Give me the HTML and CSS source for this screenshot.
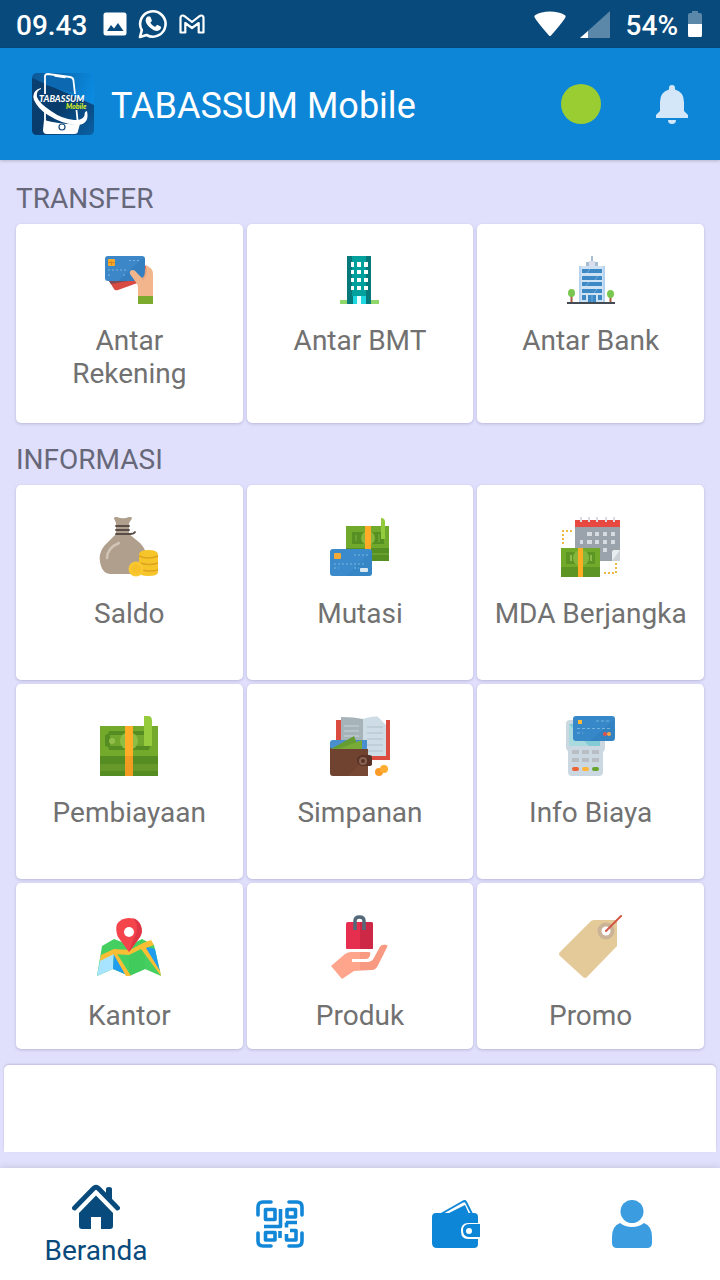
FILE: index.html
```
<!DOCTYPE html>
<html lang="id">
<head>
<meta charset="utf-8">
<meta name="viewport" content="width=device-width, initial-scale=1">
<title>TABASSUM Mobile</title>
<link rel="stylesheet" href="styles.css">
</head>
<body>
<div class="status">
  <span class="status-text">09.43</span>
  <div class="status-notes">
    <svg width="24" height="24" viewBox="0 0 24 24"><path fill="#fff" fill-rule="evenodd" d="M3 0.500h18q2.500 0 2.500 2.500v18q0 2.500-2.500 2.500H3Q.5 23.500.5 21V3Q.5.5 3 .5zM4 19h16.500l-5.500-8-4 5.500-3-3.500z"/></svg>
    <svg width="30" height="30" viewBox="0 0 30 30"><path fill="none" stroke="#fff" stroke-width="2.600" stroke-linejoin="round" d="M2 28l1.800-6.800A12.700 12.700 0 1 1 8.600 26z"/><path fill="#fff" d="M9.500 7.500h2.200q.6 0 .9.800l1.200 2.900q.2.600-.3 1.200l-1.200 1.400q1.700 2.900 4.800 4.200l1.500-1.800q.5-.5 1.100-.2l2.900 1.400q.6.300.5.900-.4 3.400-4.100 3.600-3.500 0-7.400-3.700-3.900-3.800-4-6.800 0-2.600 1.900-3.900z"/></svg>
    <svg width="26" height="20" viewBox="0 0 26 20"><path fill="none" stroke="#fff" stroke-width="2.200" stroke-linejoin="round" d="M1.500 4q0-2.500 2.300-2.500.9 0 1.700.700L13 8l7.500-5.800q.8-.7 1.700-.7 2.300 0 2.300 2.500v14.500h-4.800V9L13 14 6.300 9v9.500H1.500z"/></svg>
  </div>
  <div class="status-system">
    <svg width="32" height="26" viewBox="0 0 32 26"><path fill="#fff" d="M.5 6Q0 5 1 4.200 7 .5 16 .5t15 3.700q1 .8.5 1.800-1 3-14.500 18.600-1 1-2 0Q1.500 9 .5 6z"/></svg>
    <svg class="signal" width="30" height="27" viewBox="0 0 30 27"><path fill="#5b87a9" d="M30 0v27H0z"/><path fill="#fff" d="M8 20v7H0z"/></svg>
    <span class="status-text">54%</span>
    <svg width="14" height="26" viewBox="0 0 14 26"><path fill="#5b87a9" d="M4 0h6v2h2q2 0 2 2v10H0V4q0-2 2-2h2z"/><path fill="#fff" d="M0 13h14v11q0 2-1 2H1q-1 0-1-2z"/></svg>
  </div>
</div>

<header class="appbar">
  <svg class="logo" width="62" height="62" viewBox="0 0 62 62" role="img" aria-label="Logo">
    <defs>
      <linearGradient id="sky" x1="0" y1="0" x2="1" y2=".3"><stop offset="0" stop-color="#0d5795"/><stop offset="1" stop-color="#0a8ae0"/></linearGradient>
      <linearGradient id="deep" x1="0" y1="0" x2="1" y2="1"><stop offset="0" stop-color="#0a4072"/><stop offset=".5" stop-color="#073b6c"/><stop offset="1" stop-color="#0a62a6"/></linearGradient>
    </defs>
    <rect width="62" height="62" rx="5" fill="url(#sky)"/>
    <path fill="url(#deep)" d="M0 5L62 32v25q0 5-5 5H5q-5 0-5-5z"/>
    <path fill="#0c68b0" d="M14 3l26 3 2 14-28-8z"/>
    <path fill="none" stroke="#fff" stroke-width="1.800" d="M13 21V3q0-2 3-2l22 3q3 .5 3.400 3L43 21M13 36v12M44.500 37l1 10"/>
    <path stroke="#fff" stroke-width="1.400" stroke-linecap="round" d="M23 3l10 1.500"/>
    <path fill="#fff" d="M12 47q17 5 36 4l-2 7q0 3-4 3H15q-4 0-4-4z"/>
    <path fill="#fff" d="M9 15Q-1 18 2 27q4 9 14 15 14 9 28 10 14 0 11-14l-2 1q0 9-11 8-12-1-23-9Q7 30 5 24q-1-6 4-8z"/>
    <circle cx="30" cy="54" r="3" fill="#fff" stroke="#184b79" stroke-width="1.200"/>
    <text class="logo-name" x="7" y="29">TABASSUM</text>
    <text class="logo-sub" x="34" y="36">Mobile</text>
  </svg>
  <h1 class="title">TABASSUM Mobile</h1>
  <span class="online" role="img" aria-label="Online"></span>
  <button class="bell" type="button" aria-label="Notifikasi"><svg width="32" height="40" viewBox="0 0 32 40"><path fill="#d3e7f8" d="M16 1q3 0 3 3v1.500Q28 8 28 18v9l4 4v3H0v-3l4-4V18Q4 8 13 5.500V4q0-3 3-3zM12 36h8q0 4-4 4t-4-4z"/></svg></button>
</header>

<main class="content">
  <section class="group">
    <h2 class="heading">TRANSFER</h2>
    <div class="cards">
      <a class="card" href="#rekening">
        <svg width="48" height="48" viewBox="0 0 48 48"><path fill="#d94a42" d="M4 25l5 8q1 2 4 1l25-9 5-14-6-3z"/><path fill="#7f4a55" d="M4 25l2 3 17-3z"/><rect width="40" height="25" rx="3" fill="#3b87c8"/><path fill="#2f78b8" d="M13 25L38 2q2 0 2 3v17q0 3-3 3z" opacity=".5"/><rect x="3" y="3" width="7" height="7" rx="1" fill="#f7a928"/><path stroke="#d78422" d="M3 6.500h7M6.500 5v4"/><path fill="none" stroke="#7fb2dc" stroke-dasharray="2 2" d="M24 4.500h12M3 14h20M3 19h4M18 19h4"/><path fill="#f2b58c" d="M25 18q-1-4 3-4 2 0 4 3l5 5q3 0 3-5l1-8 3 2q4 2 4 7v22H33v-9q0-3-3-6z"/><path fill="#e7a37b" d="M40 14l2-2q0 9-4 12l-2-2q4 0 4-8z"/><rect x="33" y="40" width="15" height="8" fill="#7baa2c"/></svg>
        <span class="label">Antar<br>Rekening</span>
      </a>
      <a class="card" href="#bmt">
        <svg width="48" height="48" viewBox="0 0 48 48"><path fill="#91d668" d="M4 44h39v4H4z"/><path fill="#07797a" d="M11 0h24v48H11z"/><path fill="#00a09d" d="M16 0h14v40H16z"/><path fill="#fff" d="M15 6h3v5h-3zM21 6h4v5h-4zM28 6h4v5h-4zM15 14h3v4h-3zM21 14h4v4h-4zM28 14h4v4h-4zM15 22h3v4h-3zM21 22h4v4h-4zM28 22h4v4h-4zM15 30h3v4h-3zM21 30h4v4h-4zM28 30h4v4h-4z"/><path fill="#1ed8e1" d="M17 40h13v8H17z"/><path fill="#e9feff" d="M21 40h4v8h-4z"/></svg>
        <span class="label">Antar BMT</span>
      </a>
      <a class="card" href="#bank">
        <svg width="48" height="48" viewBox="0 0 48 48"><path fill="#a9bdd2" d="M24 0h2v7h-2zM19 6h12v5H19z"/><path fill="#d9dfef" d="M22 5h6v5h-6z"/><path fill="#cfe2f4" d="M12 10h26v37H12z"/><path fill="#b4d1ed" d="M12 10h2v37h-2zM36 10h2v37h-2z"/><path fill="#3d89c6" d="M15 13h20v4H15zM15 20h20v4H15zM15 26h20v4H15zM15 33h20v4H15zM15 39h4v5h-4zM21 39h8v7h-8zM31 39h4v5h-4z"/><path stroke="#6fabdc" d="M20 17l3-4M28 24l3-4M19 30l3-4M27 37l3-4M25 39v7"/><path stroke="#a65c3e" stroke-width="2" d="M4.500 39v8M43.500 39v8"/><ellipse cx="4.500" cy="37" rx="3.500" ry="4" fill="#79c74e"/><ellipse cx="43.500" cy="38" rx="3.500" ry="4" fill="#79c74e"/><path fill="#434b54" d="M0 46h48v2H0z"/></svg>
        <span class="label">Antar Bank</span>
      </a>
    </div>
  </section>

  <section class="group">
    <h2 class="heading">INFORMASI</h2>
    <div class="cards cards-tall">
      <a class="card" href="#saldo">
        <svg width="60" height="60" viewBox="0 0 60 60"><path fill="#b09f8c" d="M15 1.500Q15-.5 18 0q6 2.500 12 0 3-.5 3 1.500L30 6v11l11 9q9 9 5 20-3 11-11 11H11Q4 56 2 49-2 37 6 28l11-11V6z"/><path fill="none" stroke="#594d47" stroke-width="1.800" stroke-linecap="round" d="M17 9h13M17 13h13M17 17h14q4 0 5-2"/><path fill="none" stroke="#d1c4b5" stroke-width="2.500" stroke-linecap="round" d="M8 41q0-10 12-15"/><path fill="#f6c52a" d="M40 38q0-5 9.500-5t9.500 5v17q0 4-9.500 4T40 55z"/><path fill="none" stroke="#dfa321" stroke-width="1.500" d="M40 39q9 4 19 0M41 46q9 3 18 0M43 53q8 2 16 0"/><circle cx="37" cy="52" r="7.500" fill="#fac931"/><circle cx="37" cy="52" r="5" fill="#f7c229"/></svg>
        <span class="label">Saldo</span>
      </a>
      <a class="card" href="#mutasi">
        <svg width="60" height="60" viewBox="0 0 60 60"><path fill="#71a92c" d="M16 9h43v35H16z"/><path fill="#579022" d="M16 31h43v13H16zM22 15h32v12H22z"/><circle cx="38" cy="21" r="7" fill="#86b63b"/><path fill="none" stroke="#69a030" stroke-width="2" d="M26 18v6M49 17v8M16 37h43"/><path fill="#ffab28" d="M35 9h6v35h-6z"/><path fill="#93cb3e" d="M51 1q4 0 4 4v17h-4z"/><rect y="32" width="42" height="27" rx="3" fill="#3b8acb"/><path fill="#2e7ebd" d="M16 59L42 34v22q0 3-3 3z" opacity=".35"/><rect x="4" y="36" width="7" height="6" rx="1" fill="#f7a936"/><path fill="none" stroke="#79b6df" stroke-dasharray="2 2" d="M24 38h14M4 47h30M4 51h5M24 51h5"/><rect x="30" y="51" width="8" height="4" rx="1" fill="#dce8ef"/></svg>
        <span class="label">Mutasi</span>
      </a>
      <a class="card" href="#mda">
        <svg width="60" height="60" viewBox="0 0 60 60"><path fill="#9aa3ab" d="M14 3h45v41H14z"/><path fill="#e7483f" d="M14 3h45v7H14z"/><path fill="#d7dce2" d="M19 0h2v5h-2zM27 0h2v5h-2zM35 0h2v5h-2zM44 0h2v5h-2zM52 0h2v5h-2zM26 15h5v4h-5zM34 15h4v4h-4zM42 15h4v4h-4zM50 15h4v4h-4zM19 23h3v4h-3zM26 23h5v4h-5zM34 23h4v4h-4zM42 23h4v4h-4zM50 23h4v4h-4zM42 31h4v4h-4z"/><path fill="#e9edf0" d="M51 44V35q0-2 2-2h6v3z"/><path fill="#ccd3d8" d="M59 33v11h-8z"/><path fill="none" stroke="#efb940" stroke-width="2" stroke-dasharray="2 2" d="M11 14H2v15M43 56h12V45"/><path fill="#71aa2b" d="M0 31h39v29H0z"/><path fill="#5c9524" d="M0 50h39v10H0zM5 35h29v12H5z"/><circle cx="20" cy="41" r="8" fill="#83b63b"/><path fill="none" stroke="#8dbb4b" stroke-width="2" d="M10 38v6M30 38v6"/><path fill="#ffac25" d="M17 31h5v29h-5z"/></svg>
        <span class="label">MDA Berjangka</span>
      </a>
      <a class="card" href="#pembiayaan">
        <svg width="60" height="60" viewBox="0 0 60 60"><path fill="#73aa2c" d="M1 10h58v50H1z"/><path fill="#568d22" d="M1 40h58v20H1zM10 15h40q0 3 3 4v11q-3 0-3 4H10q0-4-4-4V19q4-1 4-4z"/><path fill="#72a72e" d="M11 19h38v11H11z"/><path fill="#67992a" d="M1 48h58v7H1z"/><circle cx="30" cy="25" r="9" fill="#8dbd43"/><circle cx="13" cy="25" r="3" fill="#91bd4b"/><path fill="#ffad27" d="M26 10h8v50h-8z"/><path fill="#f19b20" d="M26 40h8v20h-8z"/><path fill="#95cb3d" d="M45 0h4q4 0 4 5v25h-8z"/></svg>
        <span class="label">Pembiayaan</span>
      </a>
      <a class="card" href="#simpanan">
        <svg width="60" height="60" viewBox="0 0 60 60"><path fill="#dc4b40" d="M6 4h54v40H6z"/><path fill="#a6b3b8" d="M11 1q13 0 22 2v37H11z"/><path fill="#cedce5" d="M33 3Q40 0 56 0v40H33z"/><path fill="#fff" d="M47 0l9 9V0z"/><path stroke="#cbd6da" d="M14 10h15M14 15h15M14 20h15"/><path stroke="#afc2cf" d="M37 11h16M37 17h16M37 23h16M37 29h16M37 35h16"/><path fill="#498fd0" d="M0 33V27q0-3 3-3h34v9z"/><path fill="#659d32" d="M1 33l23-13 5 13z"/><path fill="#77aa36" d="M8 33l24-9v9z"/><path fill="#704331" d="M0 30q0 3 3 3h35v27H3q-3 0-3-3z"/><path fill="#825039" d="M18 60l20-20v20z" opacity=".4"/><path fill="#5b3227" d="M32 39h7q3 0 3 2v7q0 2-3 2h-7q-5-1-5-6 0-4 5-5z"/><circle cx="33" cy="45" r="3" fill="none" stroke="#8a6352" stroke-width="2"/><circle cx="49" cy="56" r="4" fill="#f99b28"/><circle cx="54" cy="53" r="4" fill="#ffac32"/></svg>
        <span class="label">Simpanan</span>
      </a>
      <a class="card" href="#biaya">
        <svg width="60" height="60" viewBox="0 0 60 60"><path fill="#ccd8e1" d="M5 8q0-4 4-4h31q4 0 4 4v23q0 4-2 5v20q0 4-4 4H11q-4 0-4-4V35q-2-1-2-5z"/><path fill="#83cbd5" d="M8 8h31v22H8z"/><path fill="#a9dadd" d="M8 8l20 22H8z"/><rect x="12" width="42" height="25" rx="3" fill="#3688c9"/><path fill="#2d7cba" d="M29 25L53 4v18q0 3-3 3z" opacity=".5"/><rect x="17" y="4" width="4" height="4" fill="#ffb934"/><path fill="none" stroke="#74b5df" stroke-dasharray="3 2" d="M35 5h15M16 12.500h35M16 17h6"/><circle cx="44" cy="18" r="2" fill="#e75148"/><circle cx="48" cy="18" r="2" fill="#f7a54b"/><path fill="#b9bec4" d="M11 34h7v4h-7zM21 34h7v4h-7zM31 34h7v4h-7zM11 42h7v4h-7zM21 42h7v4h-7zM31 42h7v4h-7z"/><rect x="11" y="51" width="7" height="4" rx="2" fill="#ed6337"/><rect x="21" y="51" width="7" height="4" rx="2" fill="#ffb43a"/><rect x="31" y="51" width="7" height="4" rx="2" fill="#68a530"/></svg>
        <span class="label">Info Biaya</span>
      </a>
      <a class="card card-last" href="#kantor">
        <svg width="64" height="64" viewBox="0 0 64 64"><path fill="#46cf61" d="M5 31l12-7 16 6 12-6 12 6 7 31-16-7-16 7-16-7L0 61z"/><path fill="#a7e4ff" d="M4 41l13-4-1 17L0 61z"/><path fill="#1f9def" d="M17 37l16 24-17-7zM46 31l12 3 5 23z"/><path fill="#41cb5d" d="M32 37l15-3 1 20-16 7z"/><path fill="#fabe35" d="M4 40l13-6 16 1 13-7 8-3 3 5-8 3 14 23 1 5L44 34l-12 6-15-1-14 7z"/><path fill="#fabe35" d="M17 34l17 27h-5L17 40z"/><path fill="#f4444c" d="M32 37L21 22q-3-7-1-13 4-6 12-6 9 0 12 8 2 6-1 11z"/><path fill="#df3544" d="M32 37l11-15q3-5 1-11-2-6-8-8 8 9 0 22z"/><circle cx="32" cy="17" r="5" fill="#fff"/></svg>
        <span class="label">Kantor</span>
      </a>
      <a class="card card-last" href="#produk">
        <svg width="64" height="64" viewBox="0 0 64 64"><path fill="#e62f4f" d="M20 7h23q2 0 2 2v24q0 1-1 1H19q-1 0-1-1V9q0-2 2-2z"/><path fill="#cd2946" d="M32 7h11q2 0 2 2v24q0 1-1 1H32z"/><path fill="none" stroke="#53697a" stroke-width="3.500" d="M27 15V6q0-4 4.500-4T36 6v9"/><path fill="#ffa58c" d="M3 51l14-12q3-2 6-2h17q3 0 2 3-1 4-5 4H24v3h16q4 0 6-4l6-11q2-3 6-2 2 0 1 2L50 50q-2 5-7 5l-17 1-12 8z"/><path fill="#f89a82" d="M32 37h8q3 0 2 3-1 4-5 4h-5v3h8q4 0 6-4l6-11q2-3 6-2 2 0 1 2L50 50q-2 5-7 5H32z"/></svg>
        <span class="label">Produk</span>
      </a>
      <a class="card card-last" href="#promo">
        <svg width="64" height="64" viewBox="0 0 64 64"><path fill="#e4ca98" d="M32 6q1-1 4-1h22v26L28 62q-2 2-4 0L1 41q-2-2 0-4z"/><circle cx="47" cy="16" r="8.500" fill="#cab397"/><circle cx="47" cy="16" r="4.500" fill="#fff"/><path stroke="#d45647" stroke-width="2" stroke-linecap="round" d="M47 16L62 1"/></svg>
        <span class="label">Promo</span>
      </a>
    </div>
  </section>
  <div class="banner"></div>
</main>

<nav class="tabs" aria-label="Menu utama">
  <a class="tab tab-active" href="#beranda"><svg width="48" height="46" viewBox="0 0 48 46"><path fill="none" stroke="#084a7b" stroke-width="4.800" stroke-linecap="round" stroke-linejoin="round" d="M2.500 24L21.500 4.500q2.500-2.500 5 0L45.500 24"/><path fill="#084a7b" d="M34 5q0-2 3-2t3 2v12l-6-6zM24 11.500l17 17.500v13q0 3-3 3h-9V33H19v12h-9q-3 0-3-3V29z"/></svg><span class="tab-label">Beranda</span></a>
  <a class="tab" href="#qris" aria-label="Kode QR"><svg width="48" height="48" viewBox="0 0 48 48"><g fill="none" stroke="#1287d8" stroke-width="3.600" stroke-linejoin="round"><path stroke-linecap="round" d="M2 15V7q0-5 5-5h8M33 2h8q5 0 5 5v8M2 33v8q0 5 5 5h8M33 46h8q5 0 5-5v-8"/><path d="M9.500 9.500h9.500v10H9.500zM31 9.500h8.500v7.500H31zM9.500 32.500H19v7.500H9.500zM24.500 9v17.500H8M30 22.500h11M30.500 22.500v5M34 30.500h6v9.500h-9.500v-6M24 31v7"/></g></svg></a>
  <a class="tab" href="#dompet" aria-label="Dompet"><svg width="48" height="48" viewBox="0 0 48 48"><path fill="none" stroke="#0e86d8" stroke-width="2" stroke-linejoin="round" d="M9 14L31 1.500q2-1 3 .5l6 12"/><path fill="#0e86d8" d="M15 14L33 5l4 9zM4 13h38q4 0 4 4v6H36q-7 0-7 8t7 8h10v5q0 4-4 4H5q-5 0-5-5V17q0-4 4-4z"/><path fill="#0e86d8" fill-rule="evenodd" d="M37 24h11v13H37q-6 0-6-6.500T37 24zm0 4a3 3 0 1 0 0 6 3 3 0 0 0 0-6z"/></svg></a>
  <a class="tab" href="#akun" aria-label="Akun"><svg width="40" height="48" viewBox="0 0 40 48"><circle cx="20" cy="11.500" r="11.500" fill="#3b9de0"/><path fill="#3b9de0" d="M8 23q5 4 12 4t12-4q8 3 8 14v6q0 5-5 5H5q-5 0-5-5v-6Q0 26 8 23z"/></svg></a>
</nav>
</body>
</html>
```
FILE: styles.css
```
* { box-sizing: border-box; }

body {
  margin: 0;
  min-height: 100vh;
  display: flex;
  flex-direction: column;
  background: #e0e0fc;
  color: #717171;
  font-family: Roboto, "Noto Sans", sans-serif;
  font-size: 28px;
  line-height: 33px;
}

a { color: inherit; text-decoration: none; }
svg { display: block; flex: none; }

.status {
  display: flex;
  align-items: center;
  gap: 16px;
  height: 48px;
  padding: 0 18px 0 16px;
  background: #084a7b;
  color: #fff;
}
.status-text { font-weight: 500; padding-top: 2px; }
.status-notes { display: flex; align-items: center; gap: 11px; }
.status-system { display: flex; align-items: center; gap: 10px; margin-left: auto; }
.signal { margin: 0 6px 0 4px; }

.appbar {
  display: flex;
  align-items: center;
  height: 112px;
  padding: 0 32px;
  background: #0e86d8;
  color: #fff;
  box-shadow: 0 1px 3px rgba(0, 0, 0, 0.2);
}
.logo { margin-right: 17px; }
.logo-name, .logo-sub {
  font-family: Lato, sans-serif;
  font-style: italic;
  font-weight: 900;
  fill: #fff;
}
.logo-name { font-size: 9px; }
.logo-sub { font-size: 7px; fill: #d7f01f; }
.title {
  flex: 1;
  margin: 0;
  padding-top: 3px;
  font-size: 36px;
  font-weight: 400;
  line-height: 44px;
}
.online { width: 40px; height: 40px; border-radius: 50%; background: #9acd32; }
.bell { margin-left: 55px; padding: 0; border: 0; background: none; }

.content { flex: 1; display: flex; flex-direction: column; }
.group { padding: 20px 16px 0; }
.heading {
  margin: 0;
  padding: 2px 0 9px;
  color: #67677a;
  font-size: 28px;
  font-weight: 400;
}
.cards { display: grid; grid-template-columns: repeat(3, 1fr); gap: 4px; }
.card {
  display: flex;
  flex-direction: column;
  align-items: center;
  gap: 20px;
  padding: 32px 8px 33px;
  border-radius: 5px;
  background: #fff;
  box-shadow: 0 1px 3px rgba(40, 30, 90, 0.22);
  text-align: center;
}
.cards-tall .card { padding-bottom: 50px; }
.cards-tall .card-last { padding-bottom: 17px; }
.group + .group { padding-top: 18px; }
.banner {
  flex: 1;
  min-height: 87px;
  margin: 16px 4px;
  border-radius: 5px 5px 0 0;
  background: #fff;
  box-shadow: 0 -1px 2px rgba(40, 30, 90, 0.18);
}

.tabs {
  display: grid;
  grid-template-columns: 12fr 11fr 11fr 11fr;
  min-height: 112px;
  background: #fff;
  box-shadow: 0 -1px 6px rgba(0, 0, 0, 0.12);
}
.tab { display: flex; flex-direction: column; align-items: center; justify-content: center; }
.tab-active { gap: 4px; padding-top: 3px; color: #084a7b; }
```
